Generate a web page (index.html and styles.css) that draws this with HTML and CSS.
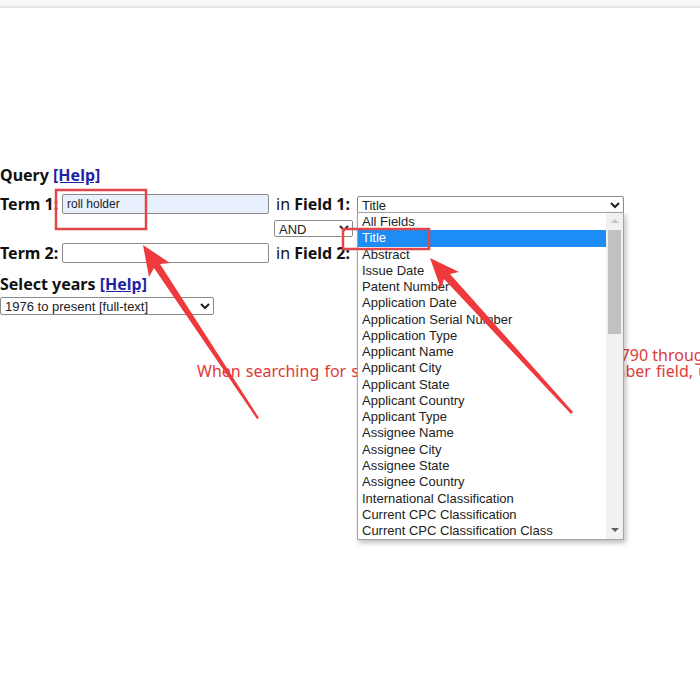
FILE: index.html
```html
<!DOCTYPE html>
<html lang="en">
  <head>
    <meta charset="UTF-8" />
    <title>Patent Search</title>
    <link rel="stylesheet" href="styles.css">
  </head>
  <body>
    <div class="topbar"></div>

    <main class="search">
      <div class="heading">Query <a href="#">[Help]</a></div>

      <div class="row">
        <label class="term-label" for="t1">Term 1:</label>
        <input class="term filled" id="t1" type="text" value="roll holder" />
        <span class="field-label">in <b>Field 1:</b></span>
        <div class="field-select">
          <select class="field">
            <option>Title</option>
          </select>
          <!-- opened option list -->
          <div class="dropdown">
            <ul class="options">
              <li>All Fields</li>
              <li class="active">Title</li>
              <li>Abstract</li>
              <li>Issue Date</li>
              <li>Patent Number</li>
              <li>Application Date</li>
              <li>Application Serial Number</li>
              <li>Application Type</li>
              <li>Applicant Name</li>
              <li>Applicant City</li>
              <li>Applicant State</li>
              <li>Applicant Country</li>
              <li>Applicant Type</li>
              <li>Assignee Name</li>
              <li>Assignee City</li>
              <li>Assignee State</li>
              <li>Assignee Country</li>
              <li>International Classification</li>
              <li>Current CPC Classification</li>
              <li>Current CPC Classification Class</li>
            </ul>
            <div class="scrollbar">
              <span class="arrow-up"></span>
              <span class="thumb"></span>
              <span class="arrow-down"></span>
            </div>
          </div>
        </div>
      </div>

      <div class="row op-row">
        <select class="op">
          <option>AND</option>
        </select>
      </div>

      <div class="row">
        <label class="term-label" for="t2">Term 2:</label>
        <input class="term" id="t2" type="text" />
        <span class="field-label">in <b>Field 2:</b></span>
      </div>

      <div class="heading years-heading">Select years <a href="#">[Help]</a></div>
      <select class="years">
        <option>1976 to present [full-text]</option>
      </select>

      <div class="note">
        <p class="note-first">Patents from 1790 through 1975 are searchable only by Issue Date, Patent Number, and Current CPC Classification.</p>
        <p>When searching for specific numbers in the Patent Number field, utility patent numbers are entered as one to eight numbers.</p>
      </div>
    </main>

    <!-- screenshot annotations -->
    <svg class="marks" width="700" height="673" viewBox="0 0 700 673">
      <rect x="56" y="190" width="90" height="39" fill="none" stroke="#e0474b" stroke-width="2.5" />
      <rect x="343" y="229" width="86" height="20" fill="none" stroke="#e0474b" stroke-width="2.5" />
      <polygon fill="#ee3a3c" points="143,245 170,263 160,264 259,418 257,419 154,268 149,277" />
      <polygon fill="#ee3a3c" points="430,258 459,272 450,274 573,412 571,414 444,279 441,289" />
    </svg>
  </body>
</html>
```

FILE: styles.css
```css
html,
body {
  margin: 0;
  overflow: hidden;
}

body {
  width: 700px;
  height: 673px;
  position: relative;
  background-color: #fff;
  font-family: "Noto Sans", "Open Sans", sans-serif;
  font-size: 16px;
  color: #111;
}

.topbar {
  height: 6px;
  background-color: #f8f8f8;
  border-bottom: 2px solid #e4e4e4;
}

.search {
  padding-top: 157px;
}

.heading {
  font-weight: bold;
  line-height: 20px;
  height: 20px;
}

.heading a {
  color: #1f1fa8;
  text-decoration: underline;
}

.row {
  display: flex;
  align-items: center;
  height: 22px;
  margin-top: 8px;
}

.term-label {
  width: 62px;
  font-weight: bold;
}

.term {
  box-sizing: border-box;
  width: 207px;
  height: 20px;
  margin: 0;
  padding: 0 4px;
  border: 1px solid #8a8a8a;
  border-radius: 2px;
  font-family: "Liberation Sans", Arial, sans-serif;
  font-size: 12px;
  color: #222;
}

.term.filled {
  background-color: #e8f0fe;
}

.field-label {
  width: 81px;
  margin-left: 7px;
  white-space: nowrap;
}

.field-select {
  position: relative;
}

select {
  box-sizing: border-box;
  margin: 0;
  font-family: "Liberation Sans", Arial, sans-serif;
  font-size: 13px;
  color: #222;
  border: 1px solid #8a8a8a;
  border-radius: 2px;
  background-color: #fff;
}

.field {
  width: 267px;
  height: 19px;
}

.op-row {
  height: 18px;
  margin-top: 4px;
  padding-left: 274px;
}

.op {
  width: 79px;
  height: 17px;
}

.op-row + .row {
  margin-top: 5px;
}

.years-heading {
  margin-top: 10px;
}

.years {
  display: block;
  width: 214px;
  height: 18px;
  margin-top: 3px;
}

.dropdown {
  position: absolute;
  top: 19px;
  left: 0;
  width: 267px;
  height: 328px;
  box-sizing: border-box;
  display: flex;
  padding-top: 1px;
  background-color: #fff;
  border: 1px solid #a3a3a3;
  box-shadow: 2px 3px 5px rgba(0, 0, 0, 0.25);
  z-index: 2;
}

.options {
  flex: 1;
  margin: 0;
  padding: 0;
  list-style: none;
  font-family: "Liberation Sans", Arial, sans-serif;
  font-size: 13px;
  color: #222;
}

.options li {
  height: 16.27px;
  line-height: 16.27px;
  padding-left: 4px;
  white-space: nowrap;
}

.options li.active {
  background-color: #1e8cf5;
  color: #fff;
}

.scrollbar {
  width: 17px;
  position: relative;
  margin-top: -1px;
  background-color: #f1f1f1;
}

.thumb {
  position: absolute;
  left: 2px;
  right: 2px;
  top: 17px;
  height: 104px;
  background-color: #c1c1c1;
}

.arrow-up,
.arrow-down {
  position: absolute;
  left: 5px;
  width: 0;
  height: 0;
  border-left: 4px solid transparent;
  border-right: 4px solid transparent;
}

.arrow-up {
  top: 6px;
  border-bottom: 4px solid #c4c4c4;
}

.arrow-down {
  bottom: 7px;
  border-top: 4px solid #606060;
}

.note {
  margin-top: 32px;
  color: #e03a3a;
  font-size: 16px;
  line-height: 16px;
  white-space: nowrap;
}

.note p {
  margin: 0;
}

.note-first {
  padding-left: 510px;
}

.note p:last-child {
  padding-left: 197px;
  word-spacing: 1px;
}

.marks {
  position: absolute;
  top: 0;
  left: 0;
  z-index: 3;
  pointer-events: none;
}
```
